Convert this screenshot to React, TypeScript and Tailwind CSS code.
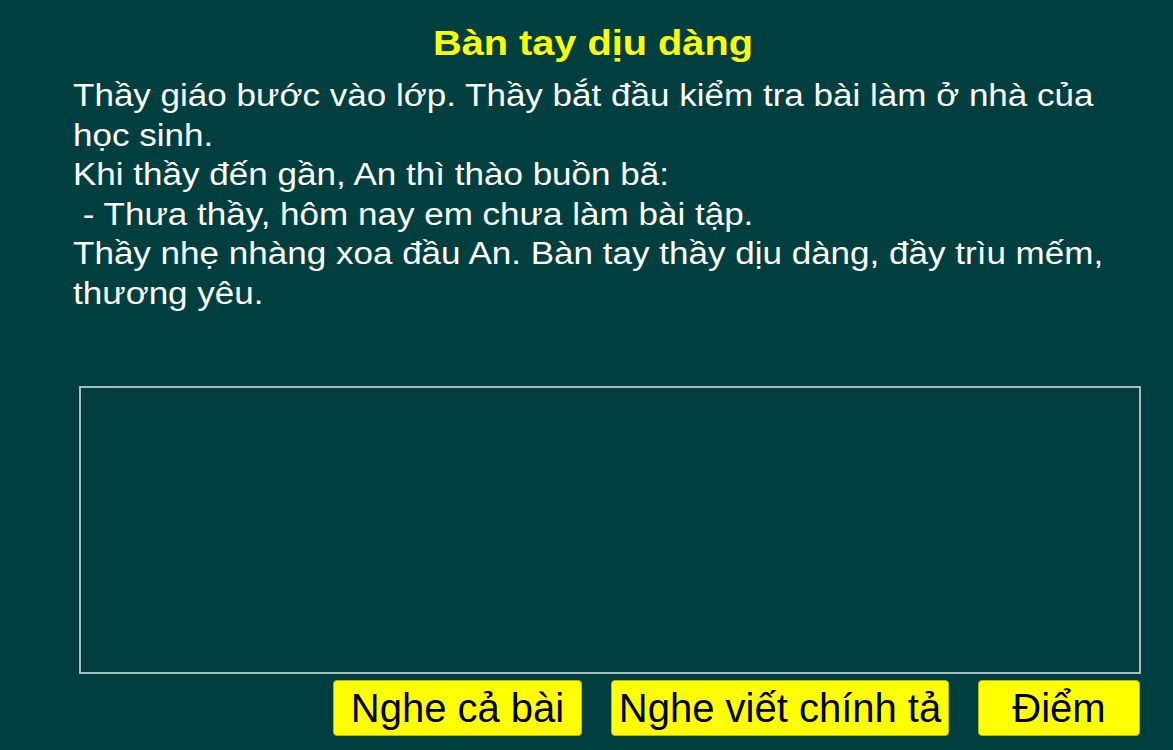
export default function App() {
  const lines = [
    "Thầy giáo bước vào lớp. Thầy bắt đầu kiểm tra bài làm ở nhà của",
    "học sinh.",
    "Khi thầy đến gần, An thì thào buồn bã:",
    "\u00a0- Thưa thầy, hôm nay em chưa làm bài tập.",
    "Thầy nhẹ nhàng xoa đầu An. Bàn tay thầy dịu dàng, đầy trìu mếm,",
    "thương yêu.",
  ];

  const buttons = [
    { label: "Nghe cả bài", w: "w-[249px]" },
    { label: "Nghe viết chính tả", w: "w-[338px]" },
    { label: "Điểm", w: "w-[162px]" },
  ];

  return (
    <div className="w-[1173px] h-[750px] bg-[#003f40] flex flex-col overflow-hidden font-['Liberation_Sans',Arial,sans-serif]">
      {/* title */}
      <h1 className="mt-[22px] h-[42px] flex justify-center pl-[13px]">
        <span className="inline-block text-[#ffff00] font-bold text-[35px] leading-[42px] scale-x-[1.135] whitespace-nowrap">
          Bàn tay dịu dàng
        </span>
      </h1>

      {/* story */}
      <div className="pl-[73px] mt-[12px] text-white text-[31px] leading-[39.5px] whitespace-pre">
        <div className="origin-left scale-x-[1.13]">
          {lines.map((l, i) => (
            <div key={i}>{l}</div>
          ))}
        </div>
      </div>

      {/* writing area */}
      <div className="ml-[79px] mt-[73px] w-[1062px] h-[288px] border-2 border-[#a9bdbd]" />

      {/* actions */}
      <div className="mt-[6px] pl-[333px] flex gap-[29px] h-[56px]">
        {buttons.map((b, i) => (
          <button
            key={i}
            className={`${b.w} h-full bg-[#ffff00] border border-[#b8b800] rounded-[4px] flex items-center justify-center overflow-hidden text-black text-[40px] leading-none whitespace-nowrap`}
          >
            {b.label}
          </button>
        ))}
      </div>
    </div>
  );
}
